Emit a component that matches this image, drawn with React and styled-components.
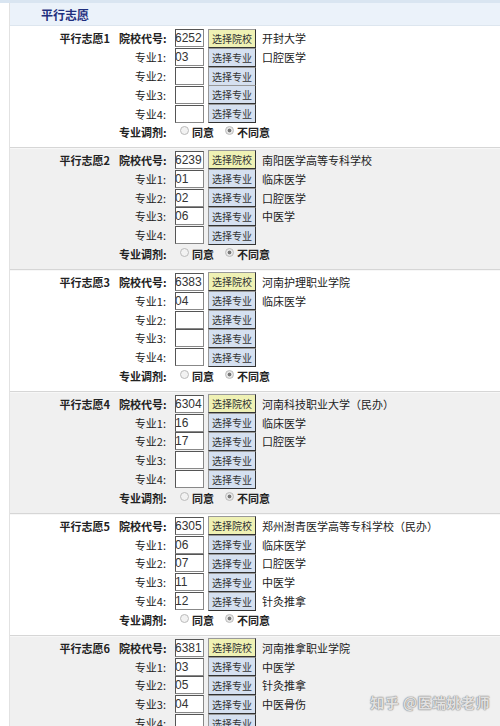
import React from "react";
import styled, { createGlobalStyle } from "styled-components";

const Global = createGlobalStyle`
  html, body { margin: 0; padding: 0; background: #fff; }
  body { font-family: "Noto Sans CJK SC", "Liberation Sans", sans-serif; font-size: 11px; color: #222; }
`;

const Page = styled.div`
  width: 500px;
  height: 726px;
  overflow: hidden;
  position: relative;
  background: #fff;
`;

const TopStrip = styled.div`
  height: 3px;
  background: #d9e5f1;
`;

const Frame = styled.div`
  margin-left: 9px;
  border-left: 1px solid #e2e2e2;
`;

const Header = styled.div`
  height: 22px;
  background: #ebf2fa;
  border-bottom: 1px solid #dde6ef;
  display: flex;
  align-items: center;
  padding-left: 31px;
  font-size: 12px;
  font-weight: bold;
  color: #1f2f7e;
`;

const Section = styled.div`
  background: ${(p) => (p.$shade ? "#f0f0f0" : "#fff")};
  border-top: ${(p) => (p.$first ? "none" : "1px solid #d6d6d6")};
  box-shadow: ${(p) => (p.$first ? "none" : "inset 0 1px 0 #f7f7f7")};
  padding: ${(p) => (p.$first ? "3px 0 5.2px" : "2.6px 0 5.6px")};
`;

const Row = styled.div`
  height: 18.8px;
  display: flex;
  align-items: center;
`;

const Title = styled.div`
  width: 100px;
  text-align: right;
  font-weight: bold;
  margin-right: 9px;
  white-space: nowrap;
`;

const Label = styled.div`
  width: 47px;
  text-align: right;
  font-weight: ${(p) => (p.$bold ? "bold" : "normal")};
  margin-right: 9px;
  white-space: nowrap;
`;

const Input = styled.div`
  width: 27px;
  height: 16px;
  border: 1px solid #555;
  border-right-color: #888;
  border-bottom-color: #888;
  background: #fff;
  font-family: "Liberation Sans", Arial, sans-serif;
  font-size: 12px;
  line-height: 16px;
  color: #333;
  overflow: hidden;
  white-space: nowrap;
  margin-right: 4px;
  text-indent: -1px;
`;

const Button = styled.div`
  width: 46px;
  height: 17px;
  border: 1px solid #999;
  border-right-color: #333;
  border-bottom-color: #333;
  background: ${(p) => (p.$school ? "#eff1b4" : "#d5e0f0")};
  font-size: 10px;
  line-height: 17px;
  text-align: center;
  color: #333;
  margin-right: 6px;
  white-space: nowrap;
`;

const Name = styled.div`
  font-size: 11px;
  color: #222;
  white-space: nowrap;
`;

const RadioGroup = styled.div`
  display: flex;
  align-items: center;
  margin-left: 5px;
`;

const Circle = styled.span`
  width: 7px;
  height: 7px;
  border-radius: 50%;
  border: 1px solid #bbb;
  background: ${(p) => (p.$on ? "radial-gradient(circle, #777 0 1.6px, #e6e6e6 2.2px)" : "#f2f2f2")};
  margin-right: 3px;
  margin-top: -3px;
  box-sizing: content-box;
`;

const RadioText = styled.span`
  font-weight: bold;
  margin-right: ${(p) => (p.$gap ? "11px" : "0")};
`;

const Watermark = styled.div`
  position: absolute;
  right: 10px;
  bottom: 14px;
  font-size: 14px;
  font-weight: bold;
  color: rgba(255, 255, 255, 0.75);
  text-shadow: 0 0 1px #888, 0 0 1px #888, 0 0 2px #aaa;
  letter-spacing: 0.5px;
  white-space: nowrap;
`;

const data = [
  { code: "6252", school: "开封大学", majors: [["03", "口腔医学"], ["", ""], ["", ""], ["", ""]] },
  { code: "6239", school: "南阳医学高等专科学校", majors: [["01", "临床医学"], ["02", "口腔医学"], ["06", "中医学"], ["", ""]] },
  { code: "6383", school: "河南护理职业学院", majors: [["04", "临床医学"], ["", ""], ["", ""], ["", ""]] },
  { code: "6304", school: "河南科技职业大学（民办）", majors: [["16", "临床医学"], ["17", "口腔医学"], ["", ""], ["", ""]] },
  { code: "6305", school: "郑州澍青医学高等专科学校（民办）", majors: [["06", "临床医学"], ["07", "口腔医学"], ["11", "中医学"], ["12", "针灸推拿"]] },
  { code: "6381", school: "河南推拿职业学院", majors: [["03", "中医学"], ["05", "针灸推拿"], ["04", "中医骨伤"], ["", ""]] },
];

export default function App() {
  return (
    <Page>
      <Global />
      <TopStrip />
      <Frame>
        <Header>平行志愿</Header>
        {data.map((d, i) => (
          <Section key={i} $first={i === 0} $shade={i % 2 === 1}>
            <Row>
              <Title>平行志愿{i + 1}</Title>
              <Label $bold>院校代号:</Label>
              <Input>{d.code}</Input>
              <Button $school>选择院校</Button>
              <Name>{d.school}</Name>
            </Row>
            {d.majors.map((m, j) => (
              <Row key={j}>
                <Title />
                <Label>专业{j + 1}:</Label>
                <Input>{m[0]}</Input>
                <Button>选择专业</Button>
                <Name>{m[1]}</Name>
              </Row>
            ))}
            <Row>
              <Title />
              <Label $bold>专业调剂:</Label>
              <RadioGroup>
                <Circle />
                <RadioText $gap>同意</RadioText>
                <Circle $on />
                <RadioText>不同意</RadioText>
              </RadioGroup>
            </Row>
          </Section>
        ))}
      </Frame>
      <Watermark>知乎 @医端姚老师</Watermark>
    </Page>
  );
}
